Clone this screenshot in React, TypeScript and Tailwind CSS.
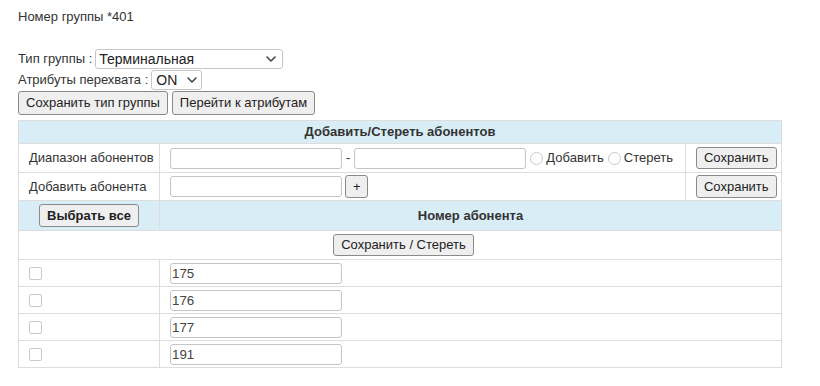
import React from "react";

const Chevron = () => (
  <svg width="10" height="6" viewBox="0 0 10 6" className="shrink-0">
    <path d="M1 1l4 4 4-4" fill="none" stroke="#444" strokeWidth="1.6" strokeLinecap="round" strokeLinejoin="round" />
  </svg>
);

const btnBase =
  "px-[7px] bg-[#efefef] border border-[#8a8a8a] rounded-[3px] text-[13px] leading-4 text-[#222] whitespace-nowrap align-middle";
const field =
  "h-[21px] w-[172px] border border-[#c6c6c6] rounded-[3px] bg-white px-[1px] text-[13.33px] text-[#444] outline-none";
const cellBase = "border border-[#ddd] px-[10px] align-middle whitespace-nowrap";
const cell = cellBase + " py-[3px]";
const cellTight = cellBase + " pt-[2px] pb-[2px]";
const cellData = cellBase + " pt-[3px] pb-[2px]";

const Radio = ({ label }: { label: string }) => (
  <label className="flex items-center">
    <span className="w-[13px] h-[13px] rounded-full border border-[#c9c9c9] bg-white mr-[3px]"></span>
    {label}
  </label>
);

const Check = () => (
  <span className="block w-[13px] h-[13px] rounded-[2px] border border-[#c9c9c9] bg-white"></span>
);

export default function App() {
  const numbers = ["175", "176", "177", "191"];

  return (
    <div className="min-h-screen bg-white px-[18px] pt-[9px] text-[13px] leading-4 text-[#333] font-['Liberation_Sans',Arial,sans-serif]">
      <div>Номер группы *401</div>

      {/* Group settings */}
      <div className="mt-[24px] flex items-center gap-[3px]">
        <span>Тип группы :</span>
        <div className="h-[20px] w-[188px] flex items-center justify-between border border-[#c6c6c6] rounded-[3px] pl-[3px] pr-[6px] text-[14px] text-[#222]">
          <span>Терминальная</span>
          <Chevron />
        </div>
      </div>
      <div className="mt-[1px] flex items-center gap-[3px]">
        <span>Атрибуты перехвата :</span>
        <div className="h-[20px] w-[51px] flex items-center justify-between border border-[#c6c6c6] rounded-[3px] pl-[4px] pr-[4px] text-[14px] text-[#222]">
          <span>ON</span>
          <Chevron />
        </div>
      </div>
      <div className="mt-[1px] flex gap-[4px]">
        <button className={btnBase + " h-[24px]"}>Сохранить тип группы</button>
        <button className={btnBase + " h-[24px]"}>Перейти к атрибутам</button>
      </div>

      {/* Subscribers table */}
      <table className="mt-[5px] w-[764px] table-fixed border-collapse border border-[#ddd]">
        <colgroup>
          <col className="w-[141px]" />
          <col />
          <col className="w-[96px]" />
        </colgroup>
        <tbody>
          <tr className="bg-[#d9edf7]">
            <th colSpan={3} className={cell + " text-center font-bold"}>
              Добавить/Стереть абонентов
            </th>
          </tr>
          <tr>
            <td className={cell + " text-left"}>Диапазон абонентов</td>
            <td className={cell}>
              <div className="flex items-center">
                <input className={field} />
                <span className="mx-[4px]">-</span>
                <input className={field} />
                <span className="ml-[4px]"></span>
                <Radio label="Добавить" />
                <span className="ml-[4px]"></span>
                <Radio label="Стереть" />
              </div>
            </td>
            <td className={cell}>
              <button className={btnBase + " h-[22px]"}>Сохранить</button>
            </td>
          </tr>
          <tr>
            <td className={cellTight}>Добавить абонента</td>
            <td className={cellTight}>
              <div className="flex items-center">
                <input className={field} />
                <button className={btnBase + " ml-[3px] w-[23px] px-0 h-[23px]"}>+</button>
              </div>
            </td>
            <td className={cellTight}>
              <button className={btnBase + " h-[23px]"}>Сохранить</button>
            </td>
          </tr>
          <tr className="bg-[#d9edf7]">
            <th className={cell + " text-center"}>
              <button className={btnBase + " h-[23px] font-bold block mx-auto"}>Выбрать все</button>
            </th>
            <th colSpan={2} className={cell + " text-center font-bold"}>
              Номер абонента
            </th>
          </tr>
          <tr>
            <td colSpan={3} className={cell + " text-center pl-[17px]"}>
              <button className={btnBase + " h-[22px] block mx-auto"}>Сохранить / Стереть</button>
            </td>
          </tr>
          {numbers.map((n) => (
            <tr key={n}>
              <td className={cellData}>
                <Check />
              </td>
              <td colSpan={2} className={cellData}>
                <input className={field + " block"} defaultValue={n} />
              </td>
            </tr>
          ))}
        </tbody>
      </table>
    </div>
  );
}
